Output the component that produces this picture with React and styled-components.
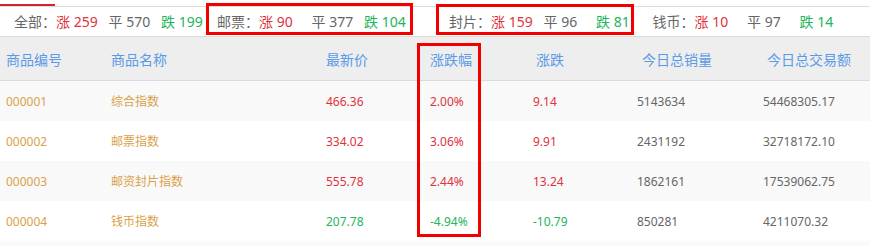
import React from "react";
import styled, { createGlobalStyle } from "styled-components";

const Global = createGlobalStyle`
  html, body { margin: 0; padding: 0; background: #fff; }
  body { font-family: "Noto Sans", "Noto Sans CJK SC", sans-serif; }
`;

const RED = "#e0323c";
const GREEN = "#22b55a";
const GRAY = "#666";
const BLUE = "#5a9ae6";
const ORANGE = "#d9a24a";

const Page = styled.div`
  position: relative;
  width: 870px;
  height: 246px;
  overflow: hidden;
  background: #fafafa;
`;

const TabBar = styled.div`
  display: flex;
  height: 6px;
  border-bottom: 1px solid #dcdcdc;
  background: #fff;
`;

const TabIndicator = styled.div`
  align-self: flex-end;
  width: 55px;
  height: 2px;
  background: #d8232f;
`;

const Summary = styled.div`
  display: flex;
  align-items: center;
  height: 29px;
  padding-left: 14px;
  border-bottom: 1px solid #dcdcdc;
  background: #fff;
  font-size: 14px;
  line-height: 29px;
  white-space: nowrap;
`;

const Group = styled.div`
  display: flex;
  margin-right: ${(p) => p.$gap}px;
`;

const Label = styled.span`
  width: 42px;
  color: ${GRAY};
`;

const Stat = styled.span`
  width: 52.5px;
  color: ${(p) => p.$color};
`;

const HeaderRow = styled.div`
  display: grid;
  grid-template-columns: 105px 215px 104px 106px 106px 125px 109px;
  height: 43px;
  align-items: center;
  background: #eeeeee;
  border-bottom: 1px solid #dcdcdc;
`;

const HeadCell = styled.div`
  padding-left: 6px;
  font-size: 14px;
  color: ${BLUE};
  white-space: nowrap;
`;

const Row = styled.div`
  display: grid;
  grid-template-columns: 105px 215px 104px 103px 104px 126px 113px;
  height: 40px;
  align-items: center;
  background: ${(p) => (p.$odd ? "#f9f9f9" : "#ffffff")};
`;

const Cell = styled.div`
  padding-left: 6px;
  font-size: 12px;
  color: ${(p) => p.$color};
  white-space: nowrap;
`;

const Mark = styled.div`
  position: absolute;
  box-sizing: border-box;
  border: 3px solid #f20000;
  pointer-events: none;
`;

const groups = [
  { label: "全部：", up: 259, flat: 570, down: 199, gap: 3.5 },
  { label: "邮票：", up: 90, flat: 377, down: 104, gap: 32.5 },
  { label: "封片：", up: 159, flat: 96, down: 81, gap: 4 },
  { label: "钱币：", up: 10, flat: 97, down: 14, gap: 0 },
];

const headers = ["商品编号", "商品名称", "最新价", "涨跌幅", "涨跌", "今日总销量", "今日总交易额"];

const rows = [
  ["000001", "综合指数", "466.36", "2.00%", "9.14", "5143634", "54468305.17"],
  ["000002", "邮票指数", "334.02", "3.06%", "9.91", "2431192", "32718172.10"],
  ["000003", "邮资封片指数", "555.78", "2.44%", "13.24", "1862161", "17539062.75"],
  ["000004", "钱币指数", "207.78", "-4.94%", "-10.79", "850281", "4211070.32"],
];

export default function App() {
  return (
    <>
      <Global />
      <Page>
        <TabBar>
          <TabIndicator />
        </TabBar>
        <Summary>
          {groups.map((g) => (
            <Group key={g.label} $gap={g.gap}>
              <Label>{g.label}</Label>
              <Stat $color={RED}>涨 {g.up}</Stat>
              <Stat $color={GRAY}>平 {g.flat}</Stat>
              <Stat $color={GREEN}>跌 {g.down}</Stat>
            </Group>
          ))}
        </Summary>
        <HeaderRow>
          {headers.map((h) => (
            <HeadCell key={h}>{h}</HeadCell>
          ))}
        </HeaderRow>
        {rows.map((r, i) => {
          const c = r[4].startsWith("-") ? GREEN : RED;
          return (
            <Row key={r[0]} $odd={i % 2 === 0}>
              <Cell $color={ORANGE}>{r[0]}</Cell>
              <Cell $color={ORANGE}>{r[1]}</Cell>
              <Cell $color={c}>{r[2]}</Cell>
              <Cell $color={c}>{r[3]}</Cell>
              <Cell $color={c}>{r[4]}</Cell>
              <Cell $color={GRAY}>{r[5]}</Cell>
              <Cell $color={GRAY}>{r[6]}</Cell>
            </Row>
          );
        })}
        <Mark style={{ left: 206, top: 3, width: 207, height: 32 }} />
        <Mark style={{ left: 436, top: 4, width: 198, height: 31 }} />
        <Mark style={{ left: 417, top: 43, width: 64, height: 194 }} />
      </Page>
    </>
  );
}
